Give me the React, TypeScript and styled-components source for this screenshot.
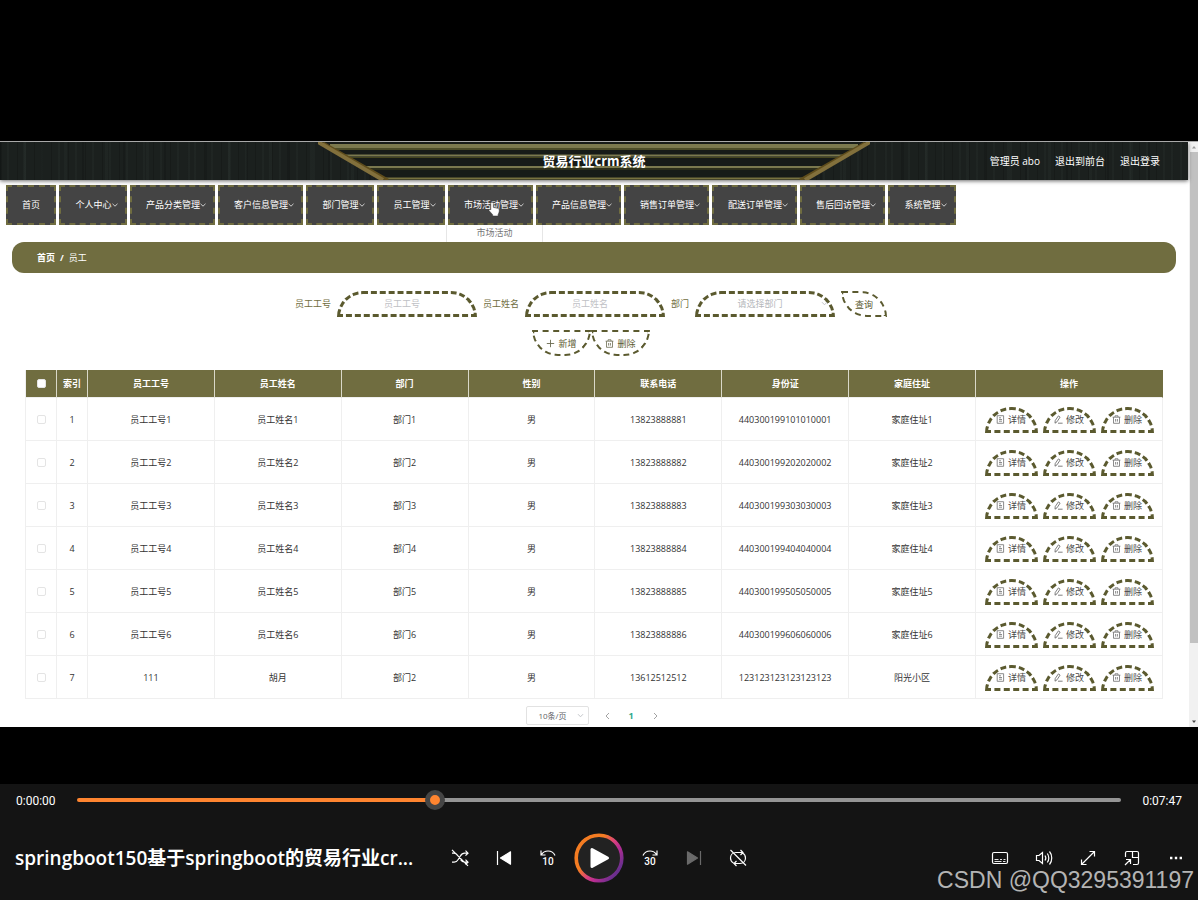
import React from "react";
import styled, { createGlobalStyle, css } from "styled-components";

const olive = "#706d40";
const dash = "#5b5a2f";
const uiFont = `"Open Sans", "Noto Sans CJK SC", sans-serif`;

const GlobalStyle = createGlobalStyle`
  *, *::before, *::after { box-sizing: border-box; }
  body { margin: 0; background: #000; font-family: ${uiFont}; }
  button, input, select { font-family: inherit; margin: 0; }
`;

const Page = styled.div`
  display: flex;
  flex-direction: column;
  min-height: 100vh;
  padding-top: 141px;
  background: #000;
`;

const Video = styled.main`
  display: flex;
  background: #fff;
  border-top: 1px solid #a9a9a9;
  overflow: hidden;
`;

const Content = styled.div`
  flex: 1;
  min-width: 0;
  font-size: 9px;
  line-height: 12px;
  color: #444;
`;

/* ---------- header ---------- */

const Header = styled.header`
  position: relative;
  display: grid;
  grid-template-columns: 1fr auto 1fr;
  align-items: center;
  height: 38px;
  padding-right: 28px;
  margin-right: 1px;
  color: #fff;
  background:
    repeating-linear-gradient(90deg, rgba(0, 0, 0, 0.16) 0 1px, transparent 1px 7px, rgba(70, 84, 78, 0.1) 7px 9px, transparent 9px 17px),
    repeating-linear-gradient(90deg, rgba(0, 0, 0, 0.14) 0 2px, transparent 2px 23px, rgba(70, 84, 78, 0.1) 23px 26px, transparent 26px 41px),
    #1b201e;
  box-shadow: 0 1px 4px rgba(0, 0, 0, 0.6);
`;

const Ornament = styled.svg`
  position: absolute;
  top: 0;
  left: 50%;
  width: 552px;
  height: 38px;
  margin-left: -276px;
`;

const Title = styled.h1`
  position: relative;
  grid-column: 2;
  margin: 0 0 0 28px;
  font-family: "Noto Sans CJK SC", sans-serif;
  font-size: 13px;
  line-height: 18px;
  font-weight: 700;
`;

const Account = styled.div`
  display: flex;
  justify-content: flex-end;
  gap: 15px;
  font-size: 10px;
  line-height: 14px;
  white-space: nowrap;
`;

const HeaderLink = styled.a`
  color: #fff;
  text-decoration: none;
`;

/* ---------- navigation ---------- */

const Nav = styled.nav`
  display: flex;
  gap: 3px;
  padding: 5px 6px 0;
`;

const NavItem = styled.div<{ $width: number }>`
  position: relative;
  width: ${(p) => p.$width}px;
`;

const NavButton = styled.button`
  display: flex;
  align-items: center;
  justify-content: center;
  width: 100%;
  height: 40px;
  padding: 0;
  border: 2px dashed ${olive};
  background: #444;
  color: #fff;
  font-size: 9px;
  line-height: 12px;
  white-space: nowrap;
`;

const NavText = styled.span<{ $indent: boolean }>`
  margin-left: ${(p) => (p.$indent ? 7 : 0)}px;
`;

const SubMenu = styled.div`
  position: absolute;
  top: 40px;
  left: -2px;
  width: 97px;
  height: 17px;
  padding-top: 2px;
  border: solid #e6e6e6;
  border-width: 0 1px;
  background: #fff;
  color: #777;
  text-align: center;
`;

const Hand = styled.svg`
  position: absolute;
  top: 16px;
  left: 40px;
  width: 12px;
  height: 16px;
`;

/* ---------- breadcrumb and filters ---------- */

const Breadcrumb = styled.div`
  display: flex;
  align-items: center;
  gap: 5px;
  height: 31px;
  margin: 17px 13px 0 12px;
  padding-left: 25px;
  border-radius: 12px;
  background: ${olive};
  color: #fff;
  font-weight: 700;
`;

const Current = styled.span`
  font-weight: 400;
`;

const Filters = styled.form`
  display: flex;
  justify-content: center;
  gap: 6px;
  margin-top: 18px;
  padding-right: 7px;
`;

const Field = styled.label`
  display: flex;
  align-items: center;
  gap: 6px;
  color: ${olive};
`;

const control = css`
  width: 140px;
  height: 26px;
  padding: 0 10px 2px 0;
  border: 3px dashed ${dash};
  border-radius: 30px 30px 0 0;
  background: #fff;
  font-size: 9px;
  text-align: center;
  outline: none;
`;

const TextInput = styled.input`
  ${control}
  color: #606266;
  &::placeholder { color: #bfc1c5; opacity: 1; }
`;

const SelectWrap = styled.span`
  position: relative;
  display: flex;
`;

const Select = styled.select`
  ${control}
  appearance: none;
  text-align-last: center;
  color: #b5b7bb;
`;

const SelectChevron = styled.svg<{ $right: number }>`
  position: absolute;
  top: calc(50% - 4px);
  right: ${(p) => p.$right}px;
  width: 7px;
  height: 7px;
`;

const SearchButton = styled.button`
  width: 46px;
  height: 26px;
  padding: 0;
  border: 2px dashed ${dash};
  border-radius: 0 30px 0 30px;
  background: #fff;
  color: ${dash};
  font-size: 9px;
`;

const Tools = styled.div`
  display: flex;
  justify-content: center;
  margin-top: 13px;
  padding-right: 7px;
`;

const ToolButton = styled.button`
  display: flex;
  align-items: center;
  justify-content: center;
  gap: 3px;
  width: 59px;
  height: 26px;
  padding: 0;
  border: 2px dashed ${dash};
  border-radius: 0 0 30px 30px;
  background: #fff;
  color: ${dash};
  font-size: 9px;
`;

/* ---------- table ---------- */

const Table = styled.table`
  table-layout: fixed;
  width: calc(100% - 51px);
  margin: 14px 26px 0 25px;
  border-spacing: 0;
  border-left: 1px solid #efefef;
  text-align: center;
`;

const Col = styled.col<{ $width?: number }>`
  width: ${(p) => (p.$width ? `${p.$width}px` : "auto")};
`;

const Th = styled.th`
  height: 28px;
  padding: 0;
  border-right: 1px solid #d9d8c8;
  border-bottom: 1px solid #efefef;
  background: ${olive};
  color: #fff;
  font-weight: 700;
  &:last-child { border-right-color: ${olive}; }
`;

const Td = styled.td`
  height: 43px;
  padding: 1px 0 0;
  border: solid #efefef;
  border-width: 0 1px 1px 0;
  color: #333;
`;

const Check = styled.input`
  appearance: none;
  display: block;
  width: 9px;
  height: 9px;
  margin: 0 auto;
  border: 1px solid #e4e4e4;
  border-radius: 2px;
  background: #fff;
`;

const Actions = styled.div`
  display: flex;
  justify-content: center;
  gap: 5px;
`;

const ActionButton = styled.button`
  display: flex;
  align-items: center;
  justify-content: center;
  gap: 3px;
  width: 53px;
  height: 26px;
  padding: 0;
  border: 3px dashed ${dash};
  border-radius: 30px 30px 0 0;
  background: #fff;
  color: #484848;
  font-size: 9px;
  white-space: nowrap;
`;

const SmallIcon = styled.svg`
  flex: none;
  width: 9px;
  height: 9px;
`;

const Pagination = styled.div`
  display: flex;
  align-items: center;
  justify-content: center;
  gap: 12px;
  margin-top: 7px;
  padding: 0 2px 2px 0;
`;

const PageSize = styled.select`
  appearance: none;
  width: 63px;
  height: 19px;
  padding: 0 10px 0 0;
  border: 1px solid #e2e2e2;
  border-radius: 2px;
  background: #fff;
  color: #606266;
  font-size: 8px;
  text-align-last: center;
`;

const PageButton = styled.button<{ $active?: boolean }>`
  display: flex;
  align-items: center;
  justify-content: center;
  width: 12px;
  height: 19px;
  padding: 0;
  border: 0;
  background: none;
  color: ${(p) => (p.$active ? "#2fa98c" : "#999")};
  font-size: 9px;
  font-weight: 700;
`;

/* ---------- page scroll bar ---------- */

const Scroll = styled.div`
  display: flex;
  flex-direction: column;
  width: 9px;
  padding-left: 1px;
  background: #f1f1f1;
`;

const ScrollArrow = styled.svg`
  width: 8px;
  height: 10px;
`;

const Thumb = styled.div`
  flex: 491;
  background: #c1c1c1;
`;

const Rest = styled.div`
  flex: 74;
`;

/* ---------- player ---------- */

const Player = styled.footer`
  position: relative;
  margin-top: auto;
  background: #141414;
  color: #fff;
`;

const Seek = styled.div`
  display: flex;
  align-items: center;
  height: 32px;
  padding: 0 16px;
  font-family: Roboto, sans-serif;
  font-size: 12px;
`;

const Time = styled.span<{ $end?: boolean }>`
  width: 61px;
  padding-top: 1px;
  text-align: ${(p) => (p.$end ? "right" : "left")};
`;

const SeekBar = styled.input`
  appearance: none;
  flex: 1;
  min-width: 0;
  height: 20px;
  background: none;
  &::-webkit-slider-runnable-track {
    height: 4px;
    border-radius: 2px;
    background: linear-gradient(90deg, #ff8530 34%, #959595 34%);
  }
  &::-webkit-slider-thumb {
    appearance: none;
    width: 20px;
    height: 20px;
    margin-top: -8px;
    border: 5px solid #454545;
    border-radius: 50%;
    background: #ff8530;
  }
`;

const Controls = styled.div`
  display: grid;
  grid-template-columns: 1fr auto 1fr;
  align-items: center;
  height: 84px;
`;

const MediaTitle = styled.div`
  padding-left: 15px;
  font-size: 19px;
  line-height: 28px;
  font-weight: 600;
  white-space: nowrap;
`;

const ControlGroup = styled.div<{ $end?: boolean }>`
  display: flex;
  align-items: center;
  justify-content: ${(p) => (p.$end ? "flex-end" : "center")};
`;

const ControlButton = styled.button<{ $width?: number }>`
  display: flex;
  align-items: center;
  justify-content: center;
  width: ${(p) => p.$width ?? 44}px;
  height: 50px;
  padding: 0;
  border: 0;
  background: none;
`;

const ControlIcon = styled.svg`
  width: 18px;
  height: 18px;
  fill: none;
  stroke: #fff;
  stroke-width: 1.2;
  font-family: Roboto, sans-serif;
  font-size: 10px;
  font-weight: 500;
`;

const PlayIcon = styled.svg`
  width: 50px;
  height: 50px;
`;

const Watermark = styled.div`
  position: absolute;
  right: 4px;
  bottom: 7px;
  font-family: "Liberation Sans", sans-serif;
  font-size: 23px;
  line-height: 26px;
  color: #b4b4b4;
  pointer-events: none;
`;

/* ---------- icons ---------- */

const Chevron = ({ color, right = 0 }: { color: string; right?: number }) => (
  <SelectChevron $right={right} viewBox="0 0 7 7" fill="none" stroke={color}>
    <path d="M1 2.2 3.5 4.8 6 2.2" />
  </SelectChevron>
);

const NavChevron = () => (
  <svg width="6" height="6" viewBox="0 0 6 6" fill="none" stroke="#ddd" strokeWidth="0.9">
    <path d="M0.5 1.8 3 4.2 5.5 1.8" />
  </svg>
);

const DetailIcon = () => (
  <SmallIcon viewBox="0 0 9 9" fill="none" stroke="#6f6f6f" strokeWidth="0.8">
    <path d="M1.2.7h6.4v7.6H1.2zM3 2.8h2M3 4.5h3M3 6.2h3" />
  </SmallIcon>
);

const EditIcon = () => (
  <SmallIcon viewBox="0 0 9 9" fill="none" stroke="#5f5f5f" strokeWidth="0.8">
    <path d="M1.2 5.6 4.4.9l1.7 1.2L3 6.8l-2 1.400zM4 8.200h4.600" />
  </SmallIcon>
);

const TrashIcon = ({ color = "#6f6f6f" }: { color?: string }) => (
  <SmallIcon viewBox="0 0 9 9" fill="none" stroke={color} strokeWidth="0.8">
    <path d="M.6 2.2h7.8M3 2V.8h3V2M1.5 2.2v6.1h6V2.2M3.6 4v2.6M5.4 4v2.6" />
  </SmallIcon>
);

const PlusIcon = () => (
  <SmallIcon viewBox="0 0 9 9" fill="none" stroke="#6b6b50" strokeWidth="0.9">
    <path d="M4.5.8v7.4M.8 4.5h7.4" />
  </SmallIcon>
);

/* ---------- data ---------- */

const menu = [
  "首页", "个人中心", "产品分类管理", "客户信息管理", "部门管理", "员工管理",
  "市场活动管理", "产品信息管理", "销售订单管理", "配送订单管理", "售后回访管理", "系统管理",
];

const menuWidth: Record<number, number> = { 2: 50, 4: 68, 6: 85 };

const heads = ["索引", "员工工号", "员工姓名", "部门", "性别", "联系电话", "身份证", "家庭住址", "操作"];

const rows = [
  ["1", "员工工号1", "员工姓名1", "部门1", "男", "13823888881", "440300199101010001", "家庭住址1"],
  ["2", "员工工号2", "员工姓名2", "部门2", "男", "13823888882", "440300199202020002", "家庭住址2"],
  ["3", "员工工号3", "员工姓名3", "部门3", "男", "13823888883", "440300199303030003", "家庭住址3"],
  ["4", "员工工号4", "员工姓名4", "部门4", "男", "13823888884", "440300199404040004", "家庭住址4"],
  ["5", "员工工号5", "员工姓名5", "部门5", "男", "13823888885", "440300199505050005", "家庭住址5"],
  ["6", "员工工号6", "员工姓名6", "部门6", "男", "13823888886", "440300199606060006", "家庭住址6"],
  ["7", "111", "胡月", "部门2", "男", "13612512512", "123123123123123123", "阳光小区"],
];

const HeaderOrnament = () => (
  <Ornament viewBox="0 0 552 38" fill="none">
    <path d="M0 0h552l-66 38H66z" fill="#171b18" />
    <path d="M12 4h528" stroke="#7b794e" strokeWidth="4" />
    <path d="M15 7h522" stroke="#4c4c28" strokeWidth="2" />
    <path d="M24 13.500h504M44 25h464" stroke="#7b794e" strokeWidth="2" />
    <path d="M26 15.500h500M46 27h460" stroke="#45451f" strokeWidth="1" />
    <path d="M64 36.500h424" stroke="#77713f" strokeWidth="2" />
    <path d="M5 1 70 38M547 1 482 38" stroke="#5f4d1c" strokeWidth="3" />
    <path d="M0 0 65 38M552 0 487 38" stroke="#82703c" strokeWidth="4" />
  </Ornament>
);

export default function App() {
  return (
    <>
      <GlobalStyle />
      <Page>
        <Video>
          <Content>
            <Header>
              <HeaderOrnament />
              <Title>贸易行业crm系统</Title>
              <Account>
                <span>管理员 abo</span>
                <HeaderLink href="#front">退出到前台</HeaderLink>
                <HeaderLink href="#logout">退出登录</HeaderLink>
              </Account>
            </Header>

            <Nav>
              {menu.map((name, i) => (
                <NavItem key={name} $width={menuWidth[name.length]}>
                  <NavButton type="button">
                    <NavText $indent={i > 0}>{name}</NavText>
                    {i > 0 && <NavChevron />}
                  </NavButton>
                  {name === "市场活动管理" && (
                    <>
                      <SubMenu>市场活动</SubMenu>
                      <Hand viewBox="0 0 12 16">
                        <path
                          d="M4 1.200c.9 0 1.300.5 1.300 1.200v4l4.700 1c.9.200 1.300.7 1.300 1.600 0 2-.6 3.300-1.200 4.400v1.600H4.700v-1.300L1.200 9.800c-.6-.9.300-1.800 1.300-1.200l.3.300V2.400c0-.7.4-1.200 1.200-1.200z"
                          fill="#fff"
                          stroke="#333"
                          strokeWidth="0.5"
                        />
                      </Hand>
                    </>
                  )}
                </NavItem>
              ))}
            </Nav>

            <Breadcrumb>
              <span>首页</span>
              <span>/</span>
              <Current>员工</Current>
            </Breadcrumb>

            <Filters onSubmit={(e) => e.preventDefault()}>
              <Field>
                员工工号
                <TextInput placeholder="员工工号" />
              </Field>
              <Field>
                员工姓名
                <TextInput placeholder="员工姓名" />
              </Field>
              <Field>
                部门
                <SelectWrap>
                  <Select>
                    <option>请选择部门</option>
                  </Select>
                  <Chevron color="#c4c6ca" right={7} />
                </SelectWrap>
              </Field>
              <SearchButton type="submit">查询</SearchButton>
            </Filters>

            <Tools>
              <ToolButton type="button">
                <PlusIcon />
                新增
              </ToolButton>
              <ToolButton type="button">
                <TrashIcon color="#6b6b50" />
                删除
              </ToolButton>
            </Tools>

            <Table>
              <colgroup>
                <Col $width={31} />
                <Col $width={31} />
                {heads.slice(1, 8).map((h) => (
                  <Col key={h} />
                ))}
                <Col $width={187} />
              </colgroup>
              <thead>
                <tr>
                  <Th>
                    <Check type="checkbox" aria-label="全选" />
                  </Th>
                  {heads.map((h) => (
                    <Th key={h}>{h}</Th>
                  ))}
                </tr>
              </thead>
              <tbody>
                {rows.map((row) => (
                  <tr key={row[0]}>
                    <Td>
                      <Check type="checkbox" aria-label={row[2]} />
                    </Td>
                    {row.map((cell, i) => (
                      <Td key={i}>{cell}</Td>
                    ))}
                    <Td>
                      <Actions>
                        <ActionButton type="button">
                          <DetailIcon />
                          详情
                        </ActionButton>
                        <ActionButton type="button">
                          <EditIcon />
                          修改
                        </ActionButton>
                        <ActionButton type="button">
                          <TrashIcon />
                          删除
                        </ActionButton>
                      </Actions>
                    </Td>
                  </tr>
                ))}
              </tbody>
            </Table>

            <Pagination>
              <SelectWrap>
                <PageSize aria-label="每页条数">
                  <option>10条/页</option>
                </PageSize>
                <Chevron color="#c4c6ca" right={5} />
              </SelectWrap>
              <PageButton type="button" aria-label="上一页">
                <svg width="7" height="8" viewBox="0 0 7 8" fill="none" stroke="currentColor" strokeWidth="0.9">
                  <path d="M5 1 2 4l3 3" />
                </svg>
              </PageButton>
              <PageButton type="button" $active>
                1
              </PageButton>
              <PageButton type="button" aria-label="下一页">
                <svg width="7" height="8" viewBox="0 0 7 8" fill="none" stroke="currentColor" strokeWidth="0.9">
                  <path d="M2 1l3 3-3 3" />
                </svg>
              </PageButton>
            </Pagination>
          </Content>

          <Scroll>
            <ScrollArrow viewBox="0 0 8 10">
              <path d="M2 6.500 4 4l2 2.500z" fill="#999" />
            </ScrollArrow>
            <Thumb />
            <Rest />
            <ScrollArrow viewBox="0 0 8 10">
              <path d="M2 3.500h4L4 6z" fill="#444" />
            </ScrollArrow>
          </Scroll>
        </Video>

        <Player>
          <Seek>
            <Time>0:00:00</Time>
            <SeekBar type="range" min={0} max={100} defaultValue={34} aria-label="播放进度" />
            <Time $end>0:07:47</Time>
          </Seek>
          <Controls>
            <MediaTitle>springboot150基于springboot的贸易行业cr...</MediaTitle>
            <ControlGroup>
              <ControlButton type="button" aria-label="随机播放">
                <ControlIcon viewBox="0 0 18 18">
                  <path d="M1 13.200h2.200c2 0 3-1 4.200-3l1.800-3C10.400 5.200 11.600 4.200 13.600 4.200H17M1 4.200h2c1.800 0 2.900.9 4 2.600M9.500 10.700c1.200 1.700 2.300 2.500 4.100 2.500H17M14.500 1.700 17 4.200l-2.500 2.500M14.500 10.700l2.500 2.500-2.500 2.500M1 .8l16 16" />
                </ControlIcon>
              </ControlButton>
              <ControlButton type="button" aria-label="上一个">
                <ControlIcon viewBox="0 0 18 18">
                  <path d="M2.500 2v14" />
                  <path d="M15.500 2.800v12.400L5.500 9z" fill="#fff" strokeLinejoin="round" />
                </ControlIcon>
              </ControlButton>
              <ControlButton type="button" aria-label="后退10秒">
                <ControlIcon viewBox="0 0 18 18">
                  <path d="M2 1.500V6h4.500M2.300 5.700C4 3.100 6.300 2 9 2c3.200 0 5.700 1.600 7 4.500" />
                  <text x="9" y="16" textAnchor="middle" fill="#fff" stroke="none">10</text>
                </ControlIcon>
              </ControlButton>
              <ControlButton type="button" $width={58} aria-label="播放">
                <PlayIcon viewBox="0 0 50 50">
                  <defs>
                    <linearGradient id="ring" x1="0.1" y1="0.2" x2="0.9" y2="0.8">
                      <stop offset="0.3" stopColor="#f47c22" />
                      <stop offset="0.55" stopColor="#d9407f" />
                      <stop offset="0.72" stopColor="#b52c92" />
                      <stop offset="1" stopColor="#6a2f8e" />
                    </linearGradient>
                  </defs>
                  <circle cx="25" cy="25" r="22.800" fill="#222" stroke="url(#ring)" strokeWidth="3.600" />
                  <path d="M18 16.500v17L33.500 25z" fill="#fff" stroke="#fff" strokeWidth="3" strokeLinejoin="round" />
                </PlayIcon>
              </ControlButton>
              <ControlButton type="button" aria-label="前进30秒">
                <ControlIcon viewBox="0 0 18 18">
                  <path d="M16 1.500V6h-4.500M15.700 5.700C14 3.100 11.700 2 9 2 5.800 2 3.300 3.600 2 6.500" />
                  <text x="9" y="16" textAnchor="middle" fill="#fff" stroke="none">30</text>
                </ControlIcon>
              </ControlButton>
              <ControlButton type="button" aria-label="下一个">
                <ControlIcon viewBox="0 0 18 18">
                  <path d="M15.500 2v14" stroke="#6a6a6a" />
                  <path d="M2.500 2.800v12.400L12.500 9z" fill="#6a6a6a" stroke="#6a6a6a" strokeLinejoin="round" />
                </ControlIcon>
              </ControlButton>
              <ControlButton type="button" aria-label="循环播放">
                <ControlIcon viewBox="0 0 18 18">
                  <path d="M4.500 14C2.600 13 1.500 11.200 1.500 9 1.500 6 3.700 3.500 7 3.500h7M11.500 1 14 3.500 11.500 6M13.500 4c2 1 3 2.800 3 5 0 3-2.200 5.500-5.500 5.500H5M7.500 12 5 14.500 7.500 17M1.500 1 17 16.500" />
                </ControlIcon>
              </ControlButton>
            </ControlGroup>
            <ControlGroup $end>
              <ControlButton type="button" aria-label="字幕">
                <ControlIcon viewBox="0 0 18 18">
                  <rect x="1.500" y="3.500" width="15" height="11" rx="1.500" />
                  <path d="M3.500 10.500h4M9 10.500h2M12.500 10.500h2M3.500 12.500h7M12 12.500h2.500" strokeWidth="0.9" />
                </ControlIcon>
              </ControlButton>
              <ControlButton type="button" aria-label="音量">
                <ControlIcon viewBox="0 0 18 18">
                  <path d="M1.500 6.500H4L7.500 3.500v11L4 11.500H1.500zM10 6.500c1 1.500 1 3.500 0 5M12.300 4.500c2 2.500 2 6.500 0 9M14.500 2.500c3 3.500 3 9.500 0 13" />
                </ControlIcon>
              </ControlButton>
              <ControlButton type="button" aria-label="全屏">
                <ControlIcon viewBox="0 0 18 18">
                  <path d="M2.500 15.500l13-13M10.500 2.500h5v5M2.500 10.500v5h5" />
                </ControlIcon>
              </ControlButton>
              <ControlButton type="button" aria-label="迷你播放器">
                <ControlIcon viewBox="0 0 18 18">
                  <path d="M2.500 8V4c0-.9.600-1.500 1.500-1.500h10c.9 0 1.500.6 1.500 1.500v10c0 .9-.6 1.500-1.500 1.500h-4M9.500 2.500v6h6M2 16l5.500-5.500M3 10.500h4.500V15" />
                </ControlIcon>
              </ControlButton>
              <ControlButton type="button" aria-label="更多">
                <ControlIcon viewBox="0 0 18 18">
                  <path d="M3 7.800h2.400v2.400H3zM7.800 7.800h2.400v2.400H7.800zM12.600 7.800H15v2.400h-2.400z" fill="#fff" stroke="none" />
                </ControlIcon>
              </ControlButton>
            </ControlGroup>
          </Controls>
          <Watermark>CSDN @QQ3295391197</Watermark>
        </Player>
      </Page>
    </>
  );
}
